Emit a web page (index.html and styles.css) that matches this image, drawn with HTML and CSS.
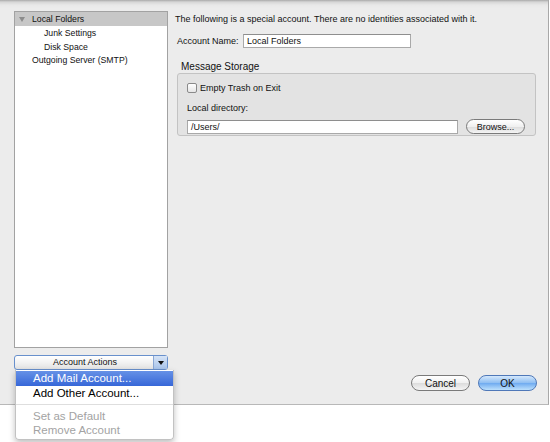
FILE: index.html
```html
<!DOCTYPE html>
<html lang="en">
<head>
    <meta charset="UTF-8">
    <title>Account Settings</title>
    <link rel="stylesheet" href="styles.css">
</head>
<body>
    <div class="window">
        <!-- Account tree -->
        <div class="sidebar">
            <ul class="tree">
                <li class="row selected"><span class="twisty"></span>Local Folders</li>
                <li class="row child">Junk Settings</li>
                <li class="row child">Disk Space</li>
                <li class="row">Outgoing Server (SMTP)</li>
            </ul>
            <div class="popup">
                <span class="popup-label">Account Actions</span>
                <span class="popup-arrow"></span>
            </div>
            <div class="menu">
                <div class="menu-item active">Add Mail Account...</div>
                <div class="menu-item">Add Other Account...</div>
                <div class="menu-sep"></div>
                <div class="menu-item disabled">Set as Default</div>
                <div class="menu-item disabled">Remove Account</div>
            </div>
        </div>

        <!-- Account panel -->
        <div class="panel">
            <p class="intro">The following is a special account. There are no identities associated with it.</p>
            <div class="field-row">
                <label>Account Name:</label>
                <div class="textbox name-box">Local Folders</div>
            </div>
            <h4 class="group-title">Message Storage</h4>
            <div class="group">
                <div class="check-row"><span class="checkbox"></span>Empty Trash on Exit</div>
                <div class="group-label">Local directory:</div>
                <div class="dir-row">
                    <div class="textbox dir-box">/Users/</div>
                    <button class="pill">Browse...</button>
                </div>
            </div>
            <div class="footer">
                <button class="pill wide">Cancel</button>
                <button class="pill wide default">OK</button>
            </div>
        </div>
    </div>
</body>
</html>
```

FILE: styles.css
```css
html, body {
    min-height: 442px;
}

body {
    margin: 0;
    background: #ffffff;
    font-family: "Liberation Sans", Arial, sans-serif;
    font-size: 9px;
    color: #111;
}

.window {
    width: 548px;
    height: 404px;
    display: flex;
    background: linear-gradient(#a9a9a9 0, #d6d6d6 2px, #e8e8e8 5px, #ececec 8px);
    border-right: 1px solid #a8a8a8;
    border-bottom: 1px solid #b8b8b8;
    position: relative;
}

.sidebar {
    width: 154px;
    padding: 11px 0 0 14px;
    position: relative;
}

.tree {
    list-style: none;
    margin: 0;
    padding: 0;
    height: 335px;
    background: white;
    border: 1px solid #a2a2a2;
    font-size: 8.7px;
}

.row {
    height: 13.8px;
    line-height: 14px;
    padding-left: 17px;
    position: relative;
}

.row.child {
    padding-left: 29px;
}

.row.selected {
    background: #c7c7c7;
}

.twisty {
    position: absolute;
    left: 4px;
    top: 5px;
    border-left: 3.5px solid transparent;
    border-right: 3.5px solid transparent;
    border-top: 5px solid #8c8c8c;
}

.popup {
    margin-top: 7px;
    display: flex;
    border: 1px solid #6890cc;
    border-radius: 3px;
    background: linear-gradient(#ffffff, #f2f2f2 50%, #e2e2e2);
    box-sizing: border-box;
    height: 15px;
    width: 154px;
}

.popup-label {
    flex: 1;
    text-align: center;
    line-height: 13px;
    padding-left: 2px;
}

.popup-arrow {
    width: 13px;
    border-left: 1px solid #8aa7d4;
    background: linear-gradient(#d6e4f6, #a8c3ea);
    position: relative;
}

.popup-arrow::after {
    content: "";
    position: absolute;
    left: 4px;
    top: 5px;
    border-left: 3px solid transparent;
    border-right: 3px solid transparent;
    border-top: 4px solid #111;
}

.menu {
    position: absolute;
    left: 15px;
    top: 370px;
    width: 157px;
    background: rgba(255, 255, 255, 0.97);
    border: 1px solid #c2c2c2;
    border-top: none;
    border-radius: 0 0 4px 4px;
    box-shadow: 0 3px 6px rgba(0, 0, 0, 0.25);
    padding: 1px 0 2px;
    font-size: 11.5px;
    z-index: 10;
}

.menu-item {
    height: 15px;
    line-height: 15px;
    padding-left: 17px;
    color: #000;
}

.menu-item.active {
    background: linear-gradient(#6691e6, #3767d8);
    color: white;
}

.menu-item.disabled {
    color: #a3a3a3;
    height: 14px;
    line-height: 14px;
}

.menu-sep {
    height: 1px;
    background: #dedede;
    margin: 3px 0 4px;
}

.panel {
    flex: 1;
    margin-left: 7px;
    padding-right: 13px;
    display: flex;
    flex-direction: column;
}

.intro {
    margin: 13px 0 0;
    line-height: 12px;
}

.field-row {
    display: flex;
    align-items: center;
    margin: 9px 0 0 2px;
}

.field-row label {
    width: 66px;
}

.textbox {
    background: white;
    border: 1px solid #a9a9a9;
    border-top-color: #8e8e8e;
    box-sizing: border-box;
    height: 14px;
    line-height: 12px;
    padding-left: 3px;
}

.name-box {
    width: 168px;
}

.group-title {
    margin: 12px 0 0 6px;
    font-size: 10px;
    font-weight: normal;
    line-height: 13px;
}

.group {
    margin: 0 1px 0 2px;
    height: 63px;
    box-sizing: border-box;
    border: 1px solid #c3c3c3;
    border-radius: 3px;
    background: #e3e3e3;
    padding: 9px 10px 0 9px;
}

.check-row {
    display: flex;
    align-items: center;
    height: 10px;
}

.checkbox {
    width: 8px;
    height: 8px;
    border: 1px solid #8a8a8a;
    border-radius: 2px;
    background: linear-gradient(#ffffff, #e6e6e6);
    margin-right: 3px;
}

.group-label {
    margin-top: 10px;
    line-height: 11px;
}

.dir-row {
    display: flex;
    align-items: center;
    margin-top: 5px;
    gap: 8px;
}

.dir-box {
    width: 271px;
}

.pill {
    font-family: inherit;
    font-size: 9px;
    height: 15px;
    width: 59px;
    padding: 0;
    border: 1px solid #7a7a7a;
    border-radius: 8px;
    background: linear-gradient(#ffffff, #f0f0f0 50%, #dcdcdc 51%, #f4f4f4);
    color: #111;
}

.footer {
    margin-top: auto;
    margin-bottom: 13px;
    display: flex;
    justify-content: flex-end;
    gap: 8px;
}

.pill.wide {
    height: 16px;
    width: 59px;
    font-size: 10px;
}

.pill.default {
    border-color: #4f78b8;
    background: linear-gradient(#d4e8fc, #8dbdf2 50%, #6eaaf0 51%, #bde0fc);
}
```
